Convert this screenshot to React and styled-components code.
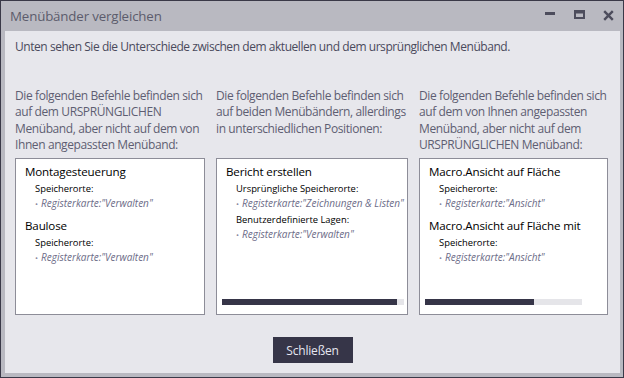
import React from "react";
import styled, { createGlobalStyle } from "styled-components";

const Global = createGlobalStyle`
  html, body { margin: 0; padding: 0; background: #3a3948; }
  body { font-family: "Segoe UI", "Open Sans", "Noto Sans", sans-serif; }
  * { box-sizing: border-box; }
`;

const Window = styled.div`
  width: 624px;
  height: 378px;
  border: 1px solid #3a3948;
  background: #b9b9c1;
  display: flex;
  flex-direction: column;
  padding: 0 3px 4px 4px;
`;

const TitleBar = styled.div`
  height: 30px;
  display: flex;
  align-items: center;
  padding-left: 5px;
  padding-right: 6px;
`;

const Title = styled.div`
  flex: 1;
  font-size: 13.3px;
  letter-spacing: -0.15px;
  color: #5c5c6c;
`;

const WinButtons = styled.div`
  display: flex;
  align-items: center;
  gap: 18px;
  margin-top: -2px;
`;

const IconBtn = styled.svg`
  display: block;
  width: 11px;
  height: 11px;
`;

const Content = styled.div`
  flex: 1;
  background: #e7e7ec;
  display: flex;
  flex-direction: column;
  padding: 8px 11px 10px 10px;
`;

const Intro = styled.div`
  font-size: 12px;
  letter-spacing: -0.45px;
  line-height: 16px;
  color: #4a4a5c;
  white-space: nowrap;
`;

const Columns = styled.div`
  display: grid;
  grid-template-columns: 190px 192px 189px;
  column-gap: 11px;
  margin-top: 33px;
`;

const Column = styled.div`
  display: flex;
  flex-direction: column;
`;

const ColHead = styled.div`
  height: 70px;
  font-size: 12px;
  letter-spacing: -0.4px;
  line-height: 16.3px;
  color: #5e5e72;
`;

const Box = styled.div`
  height: 157px;
  background: #fff;
  border: 1px solid #8d8d98;
  display: flex;
  flex-direction: column;
  overflow: hidden;
  padding: 4px 0 9px 9px;
`;

const List = styled.div`
  flex: 1;
  overflow: hidden;
`;

const Cmd = styled.div`
  font-size: 11.6px;
  letter-spacing: -0.15px;
  line-height: 18px;
  color: #000;
  white-space: nowrap;
  margin-top: ${(p) => (p.$first ? "0" : "6px")};
`;

const Label = styled.div`
  font-size: 9.4px;
  line-height: 15px;
  color: #000;
  padding-left: 10px;
  white-space: nowrap;
  margin-top: ${(p) => (p.$gap ? "1px" : "0")};
`;

const Item = styled.div`
  font-size: 10px;
  line-height: 15px;
  font-style: italic;
  color: #6c6c88;
  padding-left: 10px;
  white-space: nowrap;
  &::before {
    content: "•";
    font-style: normal;
    color: #8a8aa0;
    font-size: 8px;
    margin-right: 3px;
  }
`;

const Track = styled.div`
  width: ${(p) => p.$w}px;
  height: 6px;
  background: #e5e5e9;
  margin-left: -4px;
`;

const Thumb = styled.div`
  height: 100%;
  background: #363548;
`;

const Footer = styled.div`
  flex: 1;
  display: flex;
  align-items: flex-end;
  justify-content: center;
`;

const CloseButton = styled.button`
  width: 80px;
  height: 26px;
  border: none;
  background: #363548;
  color: #e6e6f0;
  font-family: inherit;
  font-size: 12px;
  letter-spacing: -0.2px;
  padding: 0;
  margin-left: 1px;
`;

const Scroll = ({ w, thumb }) => (
  <Track $w={w}>
    <Thumb style={{ width: thumb }} />
  </Track>
);

export default function App() {
  return (
    <>
      <Global />
      <Window>
        <TitleBar>
          <Title>Menübänder vergleichen</Title>
          <WinButtons>
            <IconBtn viewBox="0 0 11 11">
              <rect x="0" y="2" width="10" height="3" fill="#4c4c5c" />
            </IconBtn>
            <IconBtn viewBox="0 0 11 11">
              <rect x="1" y="1" width="9" height="7" fill="none" stroke="#4c4c5c" strokeWidth="2" />
              <rect x="1" y="1" width="9" height="2.5" fill="#4c4c5c" />
            </IconBtn>
            <IconBtn viewBox="0 0 11 11">
              <path d="M1.2 1.2 L9.8 9.8 M9.8 1.2 L1.2 9.8" stroke="#4c4c5c" strokeWidth="2.4" />
            </IconBtn>
          </WinButtons>
        </TitleBar>
        <Content>
          <Intro>
            Unten sehen Sie die Unterschiede zwischen dem aktuellen und dem ursprünglichen Menüband.
          </Intro>
          <Columns>
            <Column>
              <ColHead>
                Die folgenden Befehle befinden sich auf dem URSPRÜNGLICHEN Menüband, aber nicht auf dem von
                Ihnen angepassten Menüband:
              </ColHead>
              <Box>
                <List>
                  <Cmd $first>Montagesteuerung</Cmd>
                  <Label>Speicherorte:</Label>
                  <Item>Registerkarte:"Verwalten"</Item>
                  <Cmd>Baulose</Cmd>
                  <Label>Speicherorte:</Label>
                  <Item>Registerkarte:"Verwalten"</Item>
                </List>
              </Box>
            </Column>
            <Column>
              <ColHead>
                Die folgenden Befehle befinden sich auf beiden Menübändern, allerdings in unterschiedlichen
                Positionen:
              </ColHead>
              <Box>
                <List>
                  <Cmd $first>Bericht erstellen</Cmd>
                  <Label>Ursprüngliche Speicherorte:</Label>
                  <Item>Registerkarte:"Zeichnungen &amp; Listen"</Item>
                  <Label $gap>Benutzerdefinierte Lagen:</Label>
                  <Item>Registerkarte:"Verwalten"</Item>
                </List>
                <Scroll w={182} thumb={175} />
              </Box>
            </Column>
            <Column>
              <ColHead>
                Die folgenden Befehle befinden sich auf dem von Ihnen angepassten Menüband, aber nicht auf dem
                URSPRÜNGLICHEN Menüband:
              </ColHead>
              <Box>
                <List>
                  <Cmd $first>Macro.Ansicht auf Fläche</Cmd>
                  <Label>Speicherorte:</Label>
                  <Item>Registerkarte:"Ansicht"</Item>
                  <Cmd>Macro.Ansicht auf Fläche mit</Cmd>
                  <Label>Speicherorte:</Label>
                  <Item>Registerkarte:"Ansicht"</Item>
                </List>
                <Scroll w={157} thumb={109} />
              </Box>
            </Column>
          </Columns>
          <Footer>
            <CloseButton>Schließen</CloseButton>
          </Footer>
        </Content>
      </Window>
    </>
  );
}
